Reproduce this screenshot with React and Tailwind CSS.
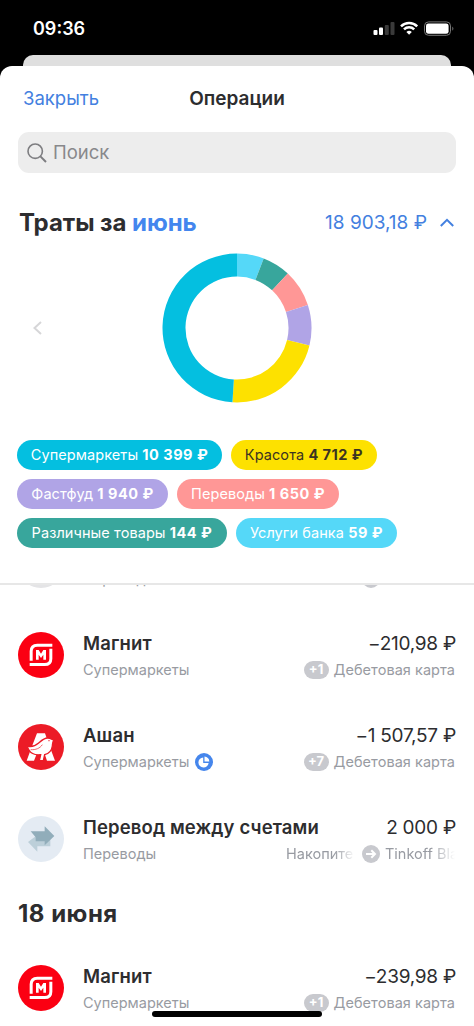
import React from "react";

function MagnitLogo() {
  return (
    <svg className="size-[46px] shrink-0" viewBox="0 0 138 138">
      <circle cx="69" cy="69" r="69" fill="#fb0012" />
      <g fill="none" stroke="#fff" strokeWidth="9">
        <path d="M39.500 86V58Q39.500 39.500 58 39.500H103" />
        <path d="M98.500 50V80Q98.500 97.500 80 97.500H35" />
      </g>
      <path d="M54 83V54H62L69 65L76 54H84V83H76V68L69 78L62 68V83Z" fill="#fff" />
    </svg>
  );
}

function AuchanLogo() {
  return (
    <svg className="size-[46px] shrink-0" viewBox="0 0 138 138">
      <circle cx="69" cy="69" r="69" fill="#ec1b26" />
      <path d="M57 28H81L90 54L111 110H87L80 90H56L48 110H26L40 72Z" fill="#fff" />
      <path
        d="M26 66C40 70 52 66 62 57C71 49 78 42 89 42C97 42 101 46 108 49C103 53 104 59 103 66C101 81 92 89 80 92L76 110H64L68 92C50 94 38 87 33 78Z"
        fill="#fff"
        stroke="#ec1b26"
        strokeWidth="4"
      />
      <path d="M38 77C53 78 66 73 73 62" fill="none" stroke="#ec1b26" strokeWidth="2" />
      <circle cx="93" cy="50" r="2" fill="#ec1b26" />
    </svg>
  );
}

function TransferLogo() {
  return (
    <svg className="size-[46px] shrink-0" viewBox="0 0 138 138">
      <circle cx="69" cy="69" r="69" fill="#e4ebf3" />
      <path d="M97 64V91H58V107L30 78L58 57V64Z" fill="#bccfd9" />
      <path d="M38 46H80V31L109 60L80 88V76H53V64L38 46Z" fill="#91adba" />
    </svg>
  );
}

const segments = [
  { from: 0, to: 21, color: "#55d8f8" },
  { from: 21, to: 43, color: "#38a69c" },
  { from: 43, to: 72, color: "#ff9796" },
  { from: 72, to: 103.5, color: "#b0a4e6" },
  { from: 103.5, to: 183.5, color: "#fde100" },
  { from: 183.5, to: 360, color: "#04bfe0" },
];

function point(angle, radius) {
  const a = (angle * Math.PI) / 180;
  return `${75 + radius * Math.sin(a)} ${75 - radius * Math.cos(a)}`;
}

function Donut() {
  return (
    <svg className="size-[150px]" viewBox="0 0 150 150">
      {segments.map(({ from, to, color }) => (
        <path
          key={color}
          d={`M${point(from, 74.5)}A74.5 74.5 0 0 1 ${point(to, 74.5)}L${point(to, 51.5)}A51.5 51.5 0 0 0 ${point(from, 51.5)}Z`}
          fill={color}
        />
      ))}
    </svg>
  );
}

function Pill({ className, name, amount }) {
  return (
    <div className={"flex h-[30px] items-center justify-center rounded-full text-[14.5px] tracking-[0.08px] whitespace-pre " + className}>
      <span>{name} <b className="font-bold tracking-[0.5px]">{amount}</b></span>
    </div>
  );
}

function Operation({ logo, title, category, categoryIcon, amount, account }) {
  return (
    <div className="flex h-[46px] items-center pr-[19px] pl-[18px] whitespace-nowrap">
      {logo}
      <div className="ml-[19px] flex flex-1 flex-col pt-[3px]">
        <div className="flex h-[26px] items-center justify-between">
          <span className="text-[18.5px] font-semibold tracking-[0.14px]">{title}</span>
          <span className="-mr-px pt-px text-[19px] tracking-[-0.25px]">{amount}</span>
        </div>
        <div className="flex h-[25px] items-center justify-between text-[14.5px] text-[#989ba2]">
          <span className="flex items-center gap-[6px]">{category}{categoryIcon}</span>
          <span className="flex items-center">{account}</span>
        </div>
      </div>
    </div>
  );
}

function Debit({ count }) {
  return (
    <>
      <span className="mr-[5px] flex h-[18px] w-[25px] items-center justify-center rounded-full bg-[#c8c9ce] text-[13px] font-bold text-white">{count}</span>
      <span className="tracking-[0.04px]">Дебетовая карта</span>
    </>
  );
}

function PieBadge() {
  return (
    <svg className="size-[18px]" viewBox="0 0 18 18">
      <circle cx="9" cy="9" r="9" fill="#4586ec" />
      <path d="M8.2 4.4V9.9H13.6A5.100 5.100 0 1 1 8.2 4.4Z" fill="#fff" />
      <path d="M9.5 3.6A4.900 4.900 0 0 1 14.3 8.500H9.5Z" fill="#fff" />
    </svg>
  );
}

export default function App() {
  return (
    <div className="relative flex h-[1026px] w-[474px] flex-col overflow-hidden bg-black font-[Inter,sans-serif] text-[#2d2d2f]">
      <div className="flex h-[55px] shrink-0 items-center justify-between pt-[2px] pr-[19px] pl-[33px]">
        <span className="text-[18px] font-semibold text-white">09:36</span>
        <svg className="h-[16px] w-[82px]" viewBox="0 0 82 16">
          <rect x="0.5" y="9" width="4" height="5" rx="1" fill="#fff" />
          <rect x="6" y="6.5" width="4" height="7.5" rx="1" fill="#fff" />
          <rect x="11.8" y="4" width="4" height="10" rx="1" fill="#3a3a3a" />
          <rect x="17.5" y="1" width="4" height="13" rx="1" fill="#3a3a3a" />
          <g fill="none" stroke="#fff" strokeWidth="2.5">
            <path d="M28 5.3A11.6 11.6 0 0 1 44.2 5.3" />
            <path d="M31 8.4A7.3 7.3 0 0 1 41.2 8.4" />
          </g>
          <path d="M33.4 10.9A4 4 0 0 1 38.8 10.9L36.1 13.8Z" fill="#fff" />
          <rect x="51.5" y="0.9" width="26" height="13.4" rx="4" fill="none" stroke="#777" strokeWidth="1" />
          <rect x="53" y="2.4" width="22.6" height="10.4" rx="2.4" fill="#fff" />
          <path d="M79.3 5.5Q81.5 7.6 79.3 9.8Z" fill="#777" />
        </svg>
      </div>
      <div className="mx-[23px] h-[11px] shrink-0 rounded-t-[10px] bg-[#dfdfdf]" />

      <main className="flex min-h-0 flex-1 flex-col rounded-t-[12px] bg-white">
        <header className="grid h-[66px] shrink-0 grid-cols-3 items-center px-[23px]">
          <span className="text-[18.5px] text-[#4380e0]">Закрыть</span>
          <span className="text-center text-[19px] font-semibold">Операции</span>
        </header>
        <div className="mx-[18px] flex h-[41px] shrink-0 items-center rounded-[11px] bg-[#ededed] pl-[9px] text-[18.5px] text-[#88888b]">
          <svg className="mr-[6px] size-[20px]" viewBox="0 0 20 20" fill="none" stroke="#7d7d80" strokeWidth="1.6">
            <circle cx="8.2" cy="8.2" r="7.2" />
            <path d="M13.4 13.4L19 19" strokeWidth="2" />
          </svg>
          <span className="pt-px">Поиск</span>
        </div>
        <div className="mt-[30px] flex h-[40px] shrink-0 items-center pr-[20px] pl-[19px]">
          <h1 className="text-[24px] font-bold tracking-[-0.05px]">Траты за <span className="text-[#4386ee]">июнь</span></h1>
          <span className="ml-auto text-[19px] text-[#4380e0]">18 903,18 ₽</span>
          <svg className="mb-px ml-[13px] h-[9px] w-[14px]" viewBox="0 0 14 9" fill="none" stroke="#4380e0" strokeWidth="2">
            <path d="M0.8 8L7 1.8L13.2 8" />
          </svg>
        </div>
        <div className="mt-[10px] grid h-[150px] shrink-0 grid-cols-[1fr_150px_1fr] items-center">
          <svg className="ml-[33px] h-[14px] w-[9px]" viewBox="0 0 9 14" fill="none" stroke="#d6d6d8" strokeWidth="2">
            <path d="M8 1L1.5 7L8 13" />
          </svg>
          <Donut />
        </div>
        <div className="mt-[37px] flex h-[143px] shrink-0 flex-col gap-[9px] pl-[17px] text-white">
          <div className="flex gap-[9px]">
            <Pill className="w-[205px] bg-[#04bfe0]" name="Супермаркеты" amount="10 399 ₽" />
            <Pill className="w-[146px] bg-[#fde100] text-[#3c3420]" name="Красота" amount="4 712 ₽" />
          </div>
          <div className="flex gap-[9px]">
            <Pill className="w-[151px] bg-[#b0a4e6]" name="Фастфуд" amount="1 940 ₽" />
            <Pill className="w-[162px] bg-[#ff9796]" name="Переводы" amount="1 650 ₽" />
          </div>
          <div className="flex gap-[9px]">
            <Pill className="w-[210px] bg-[#38a69c]" name="Различные товары" amount="144 ₽" />
            <Pill className="w-[161px] bg-[#55d8f8]" name="Услуги банка" amount="59 ₽" />
          </div>
        </div>
        <section className="flex min-h-0 flex-1 flex-col border-t-2 border-[#e7e7e7]">
          <div className="flex h-[47px] shrink-0 items-start overflow-hidden">
            <div className="flex h-[3px] w-full items-end overflow-hidden">
              <div className="ml-[18px] size-[46px] shrink-0 rounded-full bg-[#e4e4e6]" />
              <span className="ml-[19px] text-[14.5px] leading-[18px] text-[#989ba2]">Переводы</span>
              <span className="mr-[94px] ml-auto size-[18px] rounded-full bg-[#c8c9ce]" />
            </div>
          </div>
          <div className="flex shrink-0 flex-col gap-[46px]">
            <Operation logo={<MagnitLogo />} title="Магнит" category="Супермаркеты" amount="−210,98 ₽" account={<Debit count="+1" />} />
            <Operation logo={<AuchanLogo />} title="Ашан" category="Супермаркеты" categoryIcon={<PieBadge />} amount="−1 507,57 ₽" account={<Debit count="+7" />} />
            <Operation
              logo={<TransferLogo />}
              title="Перевод между счетами"
              category="Переводы"
              amount="2 000 ₽"
              account={
                <>
                  <span className="w-[69px] overflow-hidden mask-r-from-70%">Накопите</span>
                  <svg className="mr-[5px] ml-[7px] size-[18px]" viewBox="0 0 18 18">
                    <circle cx="9" cy="9" r="9" fill="#c8c9ce" />
                    <path d="M4 9H13M9.3 5.3L13 9L9.3 12.7" stroke="#fff" strokeWidth="2" fill="none" />
                  </svg>
                  <span className="w-[70px] overflow-hidden mask-r-from-65%">Tinkoff Bla</span>
                </>
              }
            />
          </div>
          <h2 className="mt-[35px] mb-[34px] h-[34px] shrink-0 pl-[18px] text-[24px] leading-[34px] font-bold tracking-[0.5px]">18 июня</h2>
          <Operation logo={<MagnitLogo />} title="Магнит" category="Супермаркеты" amount="−239,98 ₽" account={<Debit count="+1" />} />
        </section>
      </main>
      <div className="absolute bottom-[9px] left-[152px] h-[6px] w-[170px] rounded-full bg-black" />
    </div>
  );
}
